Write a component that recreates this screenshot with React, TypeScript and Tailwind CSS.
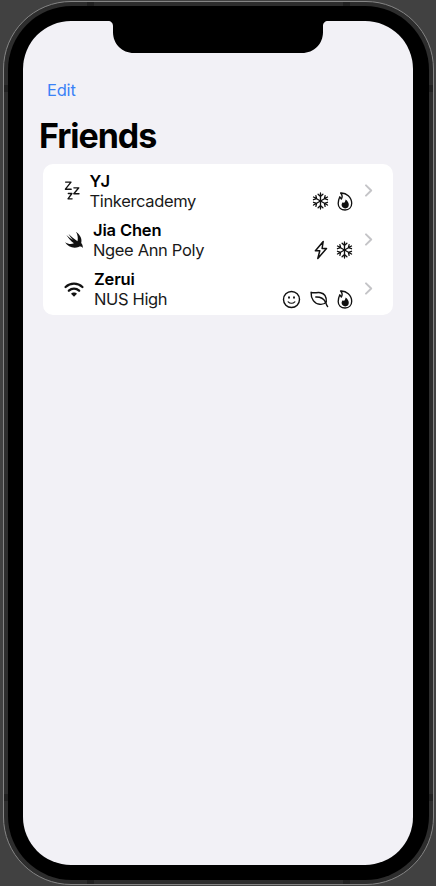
import type { ReactNode } from "react";

function Snowflake() {
  return (
    <svg width="17" height="18" viewBox="0 0 17 18" fill="none" stroke="#111" strokeWidth="1.3" strokeLinecap="round" strokeLinejoin="round">
      {[0, 60, 120, 180, 240, 300].map((a) => (
        <path key={a} transform={`rotate(${a} 8.5 9)`} d="M8.5 9V.9M6.100 2.300l2.400 2.200 2.400-2.200" />
      ))}
    </svg>
  );
}

function Flame() {
  return (
    <svg width="16" height="19" viewBox="0 0 16 19" fill="none" stroke="#111" strokeWidth="1.35" strokeLinejoin="round">
      <path d="M3.600 1C9.300.5 14.700 5.200 14.700 11.300c0 4-2.700 6.700-6.600 6.700-4.100 0-6.900-2.700-6.900-6.500 0-2.500.7-4.700 1.600-6.700l1.600 2.200C5.500 5 5.300 2.700 3.600 1Z" />
      <path fill="#111" stroke="none" d="M8.600 7.400c2 1.300 3.200 3.300 3.200 5.400 0 2.200-1.400 3.600-3.500 3.600s-3.700-1.400-3.700-3.300c0-1.100.5-2.200 1.300-2.900.4.200.7.500.9.900.9-.8 1.600-2.100 1.800-3.700Z" />
    </svg>
  );
}

function Bolt() {
  return (
    <svg width="14" height="20" viewBox="0 0 14 20" fill="none" stroke="#111" strokeWidth="1.5" strokeLinejoin="round">
      <path d="M9.200 1.400 1.400 10.800h4.400L3.800 18.500l8.700-10H8.100Z" />
    </svg>
  );
}

function Smile() {
  return (
    <svg width="19" height="19" viewBox="0 0 19 19" fill="none" stroke="#111" strokeWidth="1.4" strokeLinecap="round">
      <circle cx="9.500" cy="9.500" r="8" />
      <path d="M6.200 11.800c1.800 1.900 4.800 1.900 6.600 0" strokeWidth="1.2" />
      <ellipse cx="7" cy="7.500" rx=".9" ry="1.200" fill="#111" stroke="none" />
      <ellipse cx="12" cy="7.500" rx=".9" ry="1.200" fill="#111" stroke="none" />
    </svg>
  );
}

function Leaf() {
  return (
    <svg width="19" height="18" viewBox="0 0 19 18" fill="none" stroke="#111" strokeWidth="1.4" strokeLinecap="round" strokeLinejoin="round">
      <path d="M1.100 2.300c2.700 1.300 5.800-.2 9.300.4 4 .7 6.200 3.900 5.900 9.200-1.600 2.200-4.100 2.700-6.700 2.400C4.500 13.800.8 9.100 1.100 2.300Z" />
      <path d="M5.800 7c4.200-.2 7.900 1.600 9.600 4.900.9 1.700.9 3.300 2.200 4.700" />
    </svg>
  );
}

function Zzz() {
  return (
    <svg width="16" height="20" viewBox="0 0 16 20" fill="none" stroke="#111" strokeWidth="1.350" strokeLinecap="round" strokeLinejoin="round">
      <path d="M1.600 1.100h5.400L1.400 8.200h5.800M9.900 6.800h4.900l-5 5.900h5.200M4.300 12.500h3.600L4 17.800h4.100" />
    </svg>
  );
}

function Swift() {
  return (
    <svg width="20" height="18" viewBox="0 0 20 18" fill="#111">
      <path d="M12 .8c4.300 3 6.300 7.500 5.200 11.200 1.500 1.800 1.900 3.700 1.400 4.900-1.100-1.700-2.700-1.700-4-1C9.700 18 3.900 15.900 1 11.300c3 1.900 6.300 2.300 8.900 1C6.700 9.800 4 6.600 2.400 3.900c2.100 1.900 4.300 3.500 6.500 5C7.200 7 5.600 4.900 4.500 2.900c2.700 2.700 5.700 5.200 9 7.300.7-2.900.2-6.300-1.500-9.400Z" />
    </svg>
  );
}

function Wifi() {
  return (
    <svg width="20" height="15" viewBox="0 0 20 15" fill="none" stroke="#111" strokeWidth="2.300" strokeLinecap="round">
      <path d="M1.600 5c4.700-4.500 12.100-4.500 16.800 0M4.900 8.700c2.900-2.700 7.300-2.700 10.200 0" />
      <path fill="#111" stroke="none" d="M10 14.700 7 11.700c1.500-1.700 4.500-1.700 6 0Z" />
    </svg>
  );
}

function Chevron() {
  return (
    <svg width="8" height="13" viewBox="0 0 8 13" fill="none" stroke="#c4c4c7" strokeWidth="1.900" strokeLinecap="round" strokeLinejoin="round">
      <path d="m1 1.300 5.200 5.200L1 11.700" />
    </svg>
  );
}

type Friend = {
  name: string;
  school: string;
  icon: ReactNode;
  traits: ReactNode;
  spacing: string;
};

const friends: Friend[] = [
  { name: "YJ", school: "Tinkercademy", icon: <Zzz />, spacing: "gap-[9.500px]", traits: <><Snowflake /><Flame /></> },
  { name: "Jia Chen", school: "Ngee Ann Poly", icon: <Swift />, spacing: "gap-[9px]", traits: <><Bolt /><Snowflake /></> },
  { name: "Zerui", school: "NUS High", icon: <Wifi />, spacing: "gap-[10px]", traits: <><Smile /><Leaf /><Flame /></> },
];

function FriendRow({ name, school, icon, traits, spacing }: Friend) {
  return (
    <li className="flex h-10 justify-between">
      <div className={`flex items-center ${spacing}`}>
        {icon}
        <div>
          <p className="text-[16.500px] font-semibold leading-5 tracking-[-0.150px] text-black">{name}</p>
          <p className="text-[16.500px] leading-5 tracking-[-0.350px] text-[#191919]">{school}</p>
        </div>
      </div>
      <div className="flex gap-3">
        <div className="flex h-5 items-center gap-[8.500px] self-end">{traits}</div>
        <div className="flex items-center pb-0.5"><Chevron /></div>
      </div>
    </li>
  );
}

function HorizontalBands() {
  return (
    <div className="flex h-1 justify-between px-[83px]">
      <i className="w-[7px] bg-[#202020]" />
      <i className="w-[7px] bg-[#202020]" />
    </div>
  );
}

function VerticalBands() {
  return (
    <div className="flex w-1 flex-col justify-between py-[79px]">
      <i className="h-[7px] bg-[#202020]" />
      <i className="h-[7px] bg-[#202020]" />
    </div>
  );
}

export default function App() {
  return (
    <div className="flex h-[886px] w-[436px] items-start overflow-hidden bg-[#414141] pl-[3px] pt-px font-['Inter','Liberation_Sans',sans-serif]">
      <div className="flex h-[884px] w-[431px] flex-col rounded-[68px] border border-[#858585] bg-[#2d2d2d]">
        <HorizontalBands />
        <div className="flex flex-1">
          <VerticalBands />
          <div className="flex-1 rounded-[64px] bg-black px-4 pl-[15px] pt-[15px]">
            <main className="flex h-[844px] w-[390px] flex-col overflow-hidden rounded-[48px] bg-[#f2f1f6]">
              <svg className="shrink-0 self-center" width="220" height="32" viewBox="0 0 220 32">
                <path d="M0 0c3 0 5 2 5 5v6c0 12 9 21 21 21h168c12 0 21-9 21-21V5c0-3 2-5 5-5Z" fill="#000" />
              </svg>
              <header className="flex flex-col items-start gap-4 px-4 pt-[27px]">
                <button className="ml-2 text-[16.500px] leading-5 tracking-[-0.2px] text-[#3b82f7]">Edit</button>
                <h1 className="text-[34px] font-bold leading-10 tracking-[-1.050px]">Friends</h1>
              </header>
              <ul className="mx-5 mt-2 flex h-[151px] flex-col gap-[9px] rounded-[10px] bg-white pl-[21px] pr-5 pt-[7px]">
                {friends.map((friend) => <FriendRow key={friend.name} {...friend} />)}
              </ul>
            </main>
          </div>
          <VerticalBands />
        </div>
        <HorizontalBands />
      </div>
    </div>
  );
}
